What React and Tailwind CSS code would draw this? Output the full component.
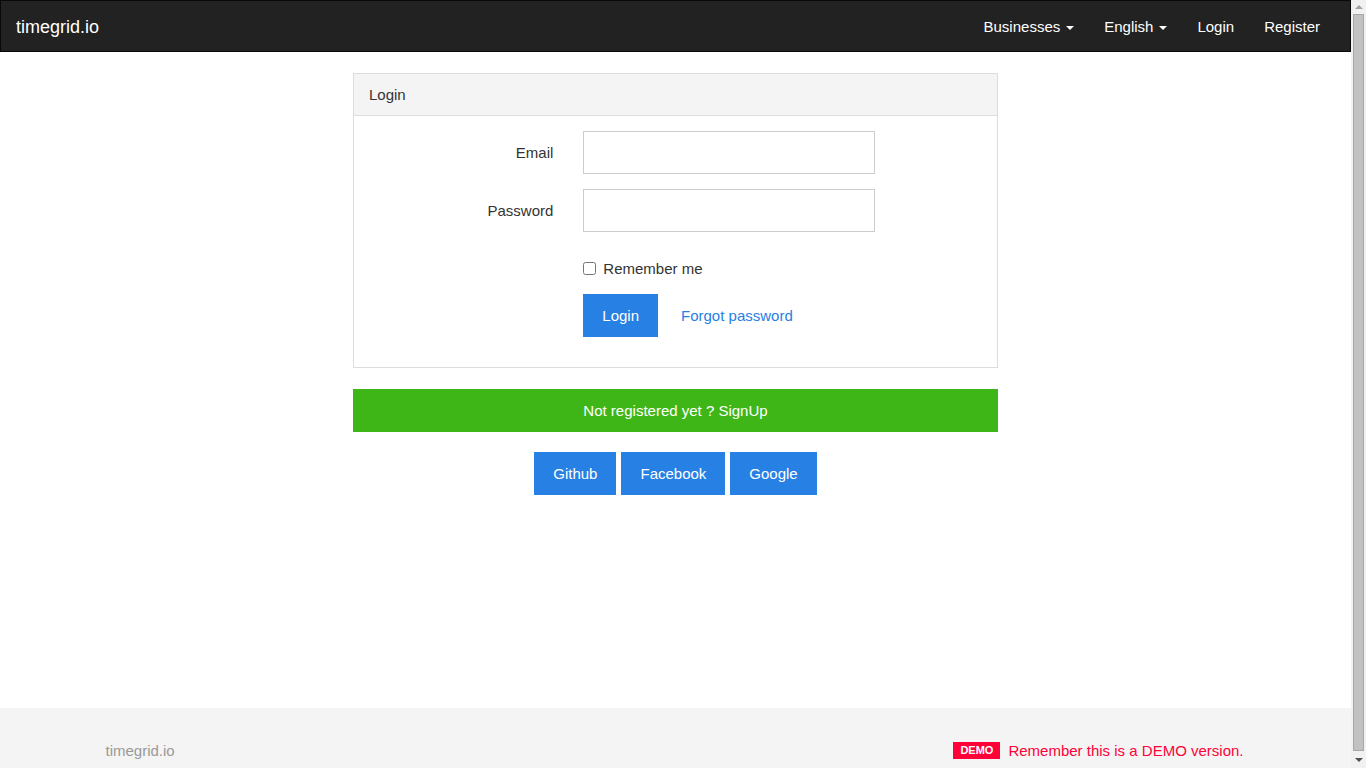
import { useState } from 'react';

function Caret() {
  return (
    <span className="ml-[6px] inline-block h-0 w-0 border-x-[4px] border-t-[4px] border-x-transparent border-t-white align-middle" />
  );
}

// browser scrollbar as it shows in the capture
function Scrollbar() {
  return (
    <div className="fixed right-0 top-0 flex h-screen w-[15px] flex-col bg-[#f1f1f1]">
      <div className="flex h-[14px] items-center justify-center">
        <span className="h-0 w-0 border-x-[4px] border-b-[4px] border-x-transparent border-b-[#a3a3a3]" />
      </div>
      <div className="mx-[2px] flex-1 border border-[#a8a8a8] bg-[#c1c1c1]" />
      <div className="flex h-[17px] items-center justify-center">
        <span className="h-0 w-0 border-x-[4px] border-t-[4px] border-x-transparent border-t-[#505050]" />
      </div>
    </div>
  );
}

function Navbar() {
  return (
    <nav className="h-[52px] border border-[#080808] bg-[#222222]">
      <div className="flex h-full items-center justify-between px-[15px] pt-[2px]">
        <a href="#" className="text-[18px] leading-[20px] text-white">timegrid.io</a>
        <ul className="flex items-center text-[15px] text-white">
          <li className="px-[15px]">Businesses<Caret /></li>
          <li className="px-[15px]">English<Caret /></li>
          <li className="px-[15px]">Login</li>
          <li className="px-[15px]">Register</li>
        </ul>
      </div>
    </nav>
  );
}

function LoginPanel() {
  const [remember, setRemember] = useState(false);

  return (
    <div className="border border-[#dddddd] bg-white">
      <div className="h-[42px] border-b border-[#dddddd] bg-[#f4f4f4] px-[15px] pt-[10px] text-[15px] leading-[21px] text-[#333]">
        Login
      </div>
      <form className="py-[15px]" onSubmit={(e) => e.preventDefault()}>
        <div className="mb-[15px] grid grid-cols-12">
          <label className="col-span-4 px-[15px] pt-[11px] text-right text-[15px] leading-[21px] text-[#333]">Email</label>
          <div className="col-span-6 px-[15px]">
            <input type="email" className="h-[43px] w-full border border-[#cccccc] px-[18px] text-[15px] outline-none" />
          </div>
        </div>
        <div className="mb-[15px] grid grid-cols-12">
          <label className="col-span-4 px-[15px] pt-[11px] text-right text-[15px] leading-[21px] text-[#333]">Password</label>
          <div className="col-span-6 px-[15px]">
            <input type="password" className="h-[43px] w-full border border-[#cccccc] px-[18px] text-[15px] outline-none" />
          </div>
        </div>
        <div className="mb-[15px] grid grid-cols-12">
          <div className="col-span-6 col-start-5 px-[15px] pt-[11px]">
            <label className="flex h-[21px] items-center text-[15px] leading-[21px] text-[#333]">
              <input
                type="checkbox"
                checked={remember}
                onChange={(e) => setRemember(e.target.checked)}
                className="m-0 mr-[7px] h-[13px] w-[13px]"
              />
              Remember me
            </label>
          </div>
        </div>
        <div className="mb-[15px] grid grid-cols-12">
          <div className="col-span-6 col-start-5 flex items-center px-[15px]">
            <button type="submit" className="h-[43px] bg-[#2780e3] px-[19px] pt-[1px] text-[15px] text-white">Login</button>
            <a href="#" className="ml-[23px] pt-[1px] text-[15px] text-[#2780e3]">Forgot password</a>
          </div>
        </div>
      </form>
    </div>
  );
}

export default function App() {
  return (
    <div className="min-h-screen w-[1351px] bg-white font-['Liberation_Sans',Arial,sans-serif] text-[15px] text-[#333]">
      <Navbar />
      <main className="h-[656px] pt-[21px]">
        <div className="mx-auto w-[645px]">
          <LoginPanel />
          <button className="mt-[21px] block h-[43px] w-full bg-[#3fb618] pt-[1px] text-[15px] text-white">
            Not registered yet ? SignUp
          </button>
          <div className="mt-[20px] flex justify-center gap-[5px]">
            <button className="h-[43px] bg-[#2780e3] px-[19px] pt-[1px] text-[15px] text-white">Github</button>
            <button className="h-[43px] bg-[#2780e3] px-[19px] pt-[1px] text-[15px] text-white">Facebook</button>
            <button className="h-[43px] bg-[#2780e3] px-[19px] pt-[1px] text-[15px] text-white">Google</button>
          </div>
        </div>
      </main>
      <footer className="h-[84px] bg-[#f4f4f4] pt-[32px]">
        <div className="mx-auto flex w-[1170px] items-center justify-between pl-[15px] pr-[17px] leading-[21px]">
          <span className="text-[#999999]">timegrid.io</span>
          <span className="flex items-center text-[#ff0039]">
            <span className="mr-[8px] bg-[#ff0039] px-[7px] pb-[3px] pt-[3px] text-[11px] font-bold leading-[11px] text-white">DEMO</span>
            Remember this is a DEMO version.
          </span>
        </div>
      </footer>
      <Scrollbar />
    </div>
  );
}
